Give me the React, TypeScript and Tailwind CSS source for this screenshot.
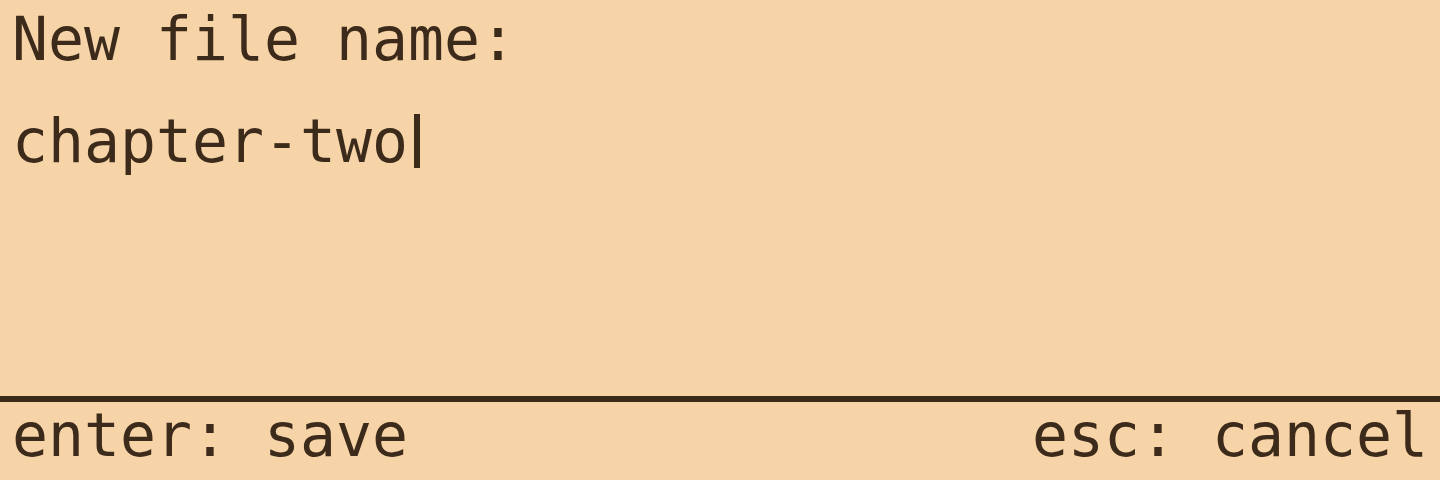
import React from 'react';

const App: React.FC = () => {
  return (
    <div className="w-[1440px] h-[480px] flex flex-col bg-[#f7d4a8] text-[#3c2a1b] font-['DejaVu_Sans_Mono',monospace] text-[59.8px] overflow-hidden">
      <div className="flex-1 px-[12px]">
        <div className="h-[78px] leading-[78px] whitespace-pre">New file name:</div>
        <div className="mt-[24px] h-[78px] leading-[78px] whitespace-pre">
          chapter-two
          <span className="inline-block w-[6px] h-[54px] ml-[6px] bg-[#3c2a1b] align-[-6px]" />
        </div>
      </div>
      <div className="h-[84px] border-t-[6px] border-[#3c2a1b] px-[12px] flex justify-between leading-[66px] whitespace-pre">
        <span>enter: save</span>
        <span>esc: cancel</span>
      </div>
    </div>
  );
};

export default App;
